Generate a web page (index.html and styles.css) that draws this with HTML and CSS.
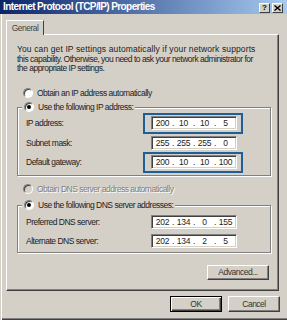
FILE: index.html
```html
<!DOCTYPE html>
<html>
<head>
<meta charset="utf-8">
<link rel="stylesheet" href="styles.css">
</head>
<body>
<div class="window">
  <div class="titlebar">
    <span class="title">Internet Protocol (TCP/IP) Properties</span>
    <div class="tbtns">
      <span class="tbtn q">?</span>
      <span class="tbtn"><svg width="7" height="6" viewBox="0 0 7 6"><path d="M0.5 0.5L6.5 5.5M6.5 0.5L0.5 5.5" stroke="#000" stroke-width="1.4"/></svg></span>
    </div>
  </div>
  <div class="main">
    <div class="tabs"><div class="tab">General</div></div>
    <div class="panel">
      <p class="desc"><span class="l1">You can get IP settings automatically if your network supports</span><br>this capability. Otherwise, you need to ask your network administrator for<br>the appropriate IP settings.</p>
      <div class="radio r-first"><span class="rb"></span>Obtain an IP address automatically</div>
      <fieldset class="group g1">
        <legend class="radio"><span class="rb on"></span>Use the following IP address:</legend>
        <div class="row"><span class="lbl">IP address:</span><span class="ip hl"><span class="oc">200</span><span class="dot">.</span><span class="oc">10</span><span class="dot">.</span><span class="oc">10</span><span class="dot">.</span><span class="oc">5</span></span></div>
        <div class="row"><span class="lbl">Subnet mask:</span><span class="ip"><span class="oc">255</span><span class="dot">.</span><span class="oc">255</span><span class="dot">.</span><span class="oc">255</span><span class="dot">.</span><span class="oc">0</span></span></div>
        <div class="row"><span class="lbl">Default gateway:</span><span class="ip hl"><span class="oc">200</span><span class="dot">.</span><span class="oc">10</span><span class="dot">.</span><span class="oc">10</span><span class="dot">.</span><span class="oc">100</span></span></div>
      </fieldset>
      <div class="radio disabled r-dns"><span class="rb off"></span>Obtain DNS server address automatically</div>
      <fieldset class="group g2">
        <legend class="radio"><span class="rb on"></span>Use the following DNS server addresses:</legend>
        <div class="row"><span class="lbl">Preferred DNS server:</span><span class="ip"><span class="oc">202</span><span class="dot">.</span><span class="oc">134</span><span class="dot">.</span><span class="oc">0</span><span class="dot">.</span><span class="oc">155</span></span></div>
        <div class="row"><span class="lbl">Alternate DNS server:</span><span class="ip"><span class="oc">202</span><span class="dot">.</span><span class="oc">134</span><span class="dot">.</span><span class="oc">2</span><span class="dot">.</span><span class="oc">5</span></span></div>
      </fieldset>
      <div class="btn adv">Advanced...</div>
    </div>
    <div class="actions">
      <div class="btn ok">OK</div>
      <div class="btn">Cancel</div>
    </div>
  </div>
</div>
</body>
</html>
```
FILE: styles.css
```css
* { box-sizing: border-box; }
html, body { margin: 0; padding: 0; }
body {
  width: 287px;
  height: 320px;
  overflow: hidden;
  background: #d4d0c8;
  font-family: "Liberation Sans", Arial, sans-serif;
  font-size: 8.5px;
  letter-spacing: -0.5px;
  color: #222;
}
.window {
  width: 287px;
  height: 320px;
  background: #d4d0c8;
  box-shadow: inset 1px 0 0 #d4d0c8, inset 2px 0 0 #fff, inset 0 -1px 0 #404040, inset 0 -2px 0 #808080;
  display: flex;
  flex-direction: column;
}
.titlebar {
  height: 14px;
  background: linear-gradient(to right, #0a246a, #a6caf0);
  display: flex;
  align-items: flex-start;
  justify-content: space-between;
  padding: 0 4px 0 3px;
}
.title {
  color: #fff;
  font-weight: bold;
  font-size: 10px;
  letter-spacing: -0.6px;
  line-height: 13px;
}
.tbtns { display: flex; gap: 2px; margin-top: 3px; }
.tbtn {
  width: 11px;
  height: 10px;
  background: #d4d0c8;
  border: 1px solid;
  border-color: #fff #404040 #404040 #fff;
  display: flex;
  align-items: center;
  justify-content: center;
  font-weight: bold;
  font-size: 8px;
  letter-spacing: 0;
  line-height: 1;
  color: #000;
}
.main {
  flex: 1;
  padding: 6px 7px 0 6px;
  display: flex;
  flex-direction: column;
}
.tabs { display: flex; }
.tab {
  position: relative;
  z-index: 1;
  width: 38px;
  height: 15px;
  margin-bottom: -1px;
  background: #d4d0c8;
  border: 1px solid;
  border-bottom: none;
  border-color: #fff #404040 transparent #fff;
  display: flex;
  align-items: center;
  justify-content: center;
  color: #444;
}
.panel {
  width: 273px;
  height: 257px;
  border: 1px solid;
  border-color: #fff #404040 #404040 #fff;
  box-shadow: inset -1px -1px 0 #808080;
  padding: 10px 7px 0 10px;
  display: flex;
  flex-direction: column;
}
.desc {
  margin: 0;
  line-height: 9.7px;
  white-space: nowrap;
}
.l1 { letter-spacing: 0.12px; }
.radio {
  height: 12px;
  display: flex;
  align-items: center;
  padding-left: 6px;
  white-space: nowrap;
}
.r-first { margin-top: 13px; }
.r-dns { margin-top: 7px; }
.rb {
  position: relative;
  width: 10px;
  height: 10px;
  border-radius: 50%;
  background: #fff;
  border: 1px solid;
  border-color: #808080 #fff #fff #808080;
  box-shadow: inset 1px 1px 0 #404040;
  margin-right: 4px;
  flex: none;
}
.rb.on::after {
  content: "";
  position: absolute;
  left: 2px;
  top: 2px;
  width: 4px;
  height: 4px;
  border-radius: 50%;
  background: #000;
}
.rb.off { background: #d4d0c8; }
.disabled { color: #808080; text-shadow: 1px 1px 0 #fff; }
.group {
  margin: 2px 0 0 0;
  padding: 3px 6px 6px 8px;
  border: 1px solid #808080;
  box-shadow: inset 1px 1px 0 #fff, 1px 1px 0 #fff;
  display: flex;
  flex-direction: column;
  gap: 5.5px;
}
.group legend {
  margin-left: -4px;
  padding: 0 2px;
  background: #d4d0c8;
}
.g2 { margin-top: 4px; padding-top: 4px; padding-bottom: 4px; gap: 4.5px; }
.row {
  display: flex;
  align-items: center;
  height: 14px;
}
.lbl { width: 125px; }
.ip {
  position: relative;
  width: 86px;
  height: 14px;
  background: #fff;
  border: 1px solid;
  border-color: #808080 #fff #fff #808080;
  box-shadow: inset 1px 1px 0 #404040, inset -1px -1px 0 #d4d0c8;
  padding-left: 2px;
  display: flex;
  align-items: center;
  letter-spacing: -0.2px;
}
.oc { width: 17px; text-align: center; }
.dot { width: 4px; text-align: center; }
.hl::after {
  content: "";
  position: absolute;
  left: -9px;
  right: -7px;
  top: -4px;
  bottom: -5px;
  border: 2px solid #1f5f99;
}
.btn {
  height: 16px;
  width: 52px;
  background: #d4d0c8;
  border: 1px solid;
  border-color: #fff #404040 #404040 #fff;
  box-shadow: inset -1px -1px 0 #808080;
  display: flex;
  align-items: center;
  justify-content: center;
  color: #333;
}
.adv {
  align-self: flex-end;
  width: 62px;
  height: 15px;
  margin-top: 12px;
  margin-right: 2px;
}
.actions {
  display: flex;
  justify-content: flex-end;
  gap: 6px;
  margin-top: 5px;
}
.ok {
  border: 1px solid #000;
  box-shadow: inset 1px 1px 0 #fff, inset -1px -1px 0 #404040, inset -2px -2px 0 #808080;
}
```
